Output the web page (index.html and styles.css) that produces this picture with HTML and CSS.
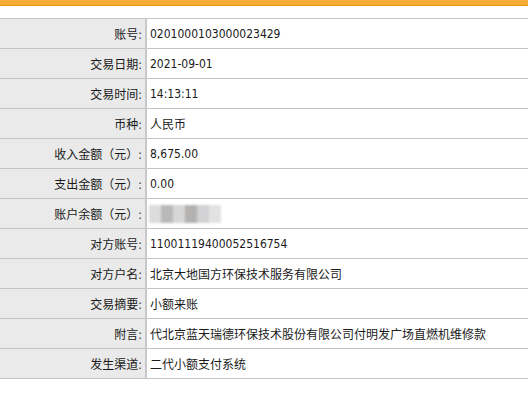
FILE: index.html
```html
<!DOCTYPE html>
<html lang="zh-CN">
<head>
<meta charset="UTF-8">
<meta name="viewport" content="width=device-width, initial-scale=1.0">
<title>交易明细</title>
<link rel="stylesheet" href="styles.css">
</head>

<body>
  <div class="topbar"></div>

  <table class="detail">
    <tbody>
      <tr><th>账号:</th><td>0201000103000023429</td></tr>
      <tr><th>交易日期:</th><td>2021-09-01</td></tr>
      <tr><th>交易时间:</th><td>14:13:11</td></tr>
      <tr><th>币种:</th><td>人民币</td></tr>
      <tr><th>收入金额（元）:</th><td>8,675.00</td></tr>
      <tr><th>支出金额（元）:</th><td>0.00</td></tr>
      <tr>
        <th>账户余额（元）:</th>
        <td>
          <div class="masked">
            <span class="m1"></span><span class="m2"></span><span class="m3"></span>
            <span class="m4"></span><span class="m5"></span><span class="m6"></span>
          </div>
        </td>
      </tr>
      <tr><th>对方账号:</th><td>11001119400052516754</td></tr>
      <tr><th>对方户名:</th><td>北京大地国方环保技术服务有限公司</td></tr>
      <tr><th>交易摘要:</th><td>小额来账</td></tr>
      <tr><th>附言:</th><td>代北京蓝天瑞德环保技术股份有限公司付明发广场直燃机维修款</td></tr>
      <tr><th>发生渠道:</th><td>二代小额支付系统</td></tr>
    </tbody>
  </table>
</body>
</html>
```

FILE: styles.css
```css
* {
  box-sizing: border-box;
  margin: 0;
  padding: 0;
}

body {
  font-family: "DejaVu Sans Condensed", "Noto Sans CJK SC", sans-serif;
  font-size: 12px;
  color: #1a1a1a;
  background: #fff;
}

.topbar {
  height: 6px;
  background: #f7ae38;
  border-bottom: 1px solid #e8950f;
  margin-bottom: 12px;
}

.detail {
  width: 100%;
  border-collapse: collapse;
}

.detail th,
.detail td {
  height: 30px;
  border-top: 1px solid #c4c4c4;
  border-bottom: 1px solid #c4c4c4;
  font-weight: normal;
  white-space: nowrap;
}

.detail th {
  width: 146px;
  text-align: right;
  padding-right: 3px;
  background: #e9eae9;
  border-right: 2px solid #c8c8c8;
}

.detail td {
  text-align: left;
  padding-left: 3px;
}

/* balance hidden behind a blurred mosaic */
.masked {
  display: flex;
  width: 72px;
  height: 18px;
  margin-left: -1px;
  filter: blur(1.2px);
}

.masked span {
  flex: 1;
}

.m1 { background: #dcdcdc; }
.m2 { background: #b9b9b9; }
.m3 { background: #d6d6d6; }
.m4 { background: #b3b2b1; }
.m5 { background: #d2d2d4; }
.m6 { background: #e2e2e2; }
```
